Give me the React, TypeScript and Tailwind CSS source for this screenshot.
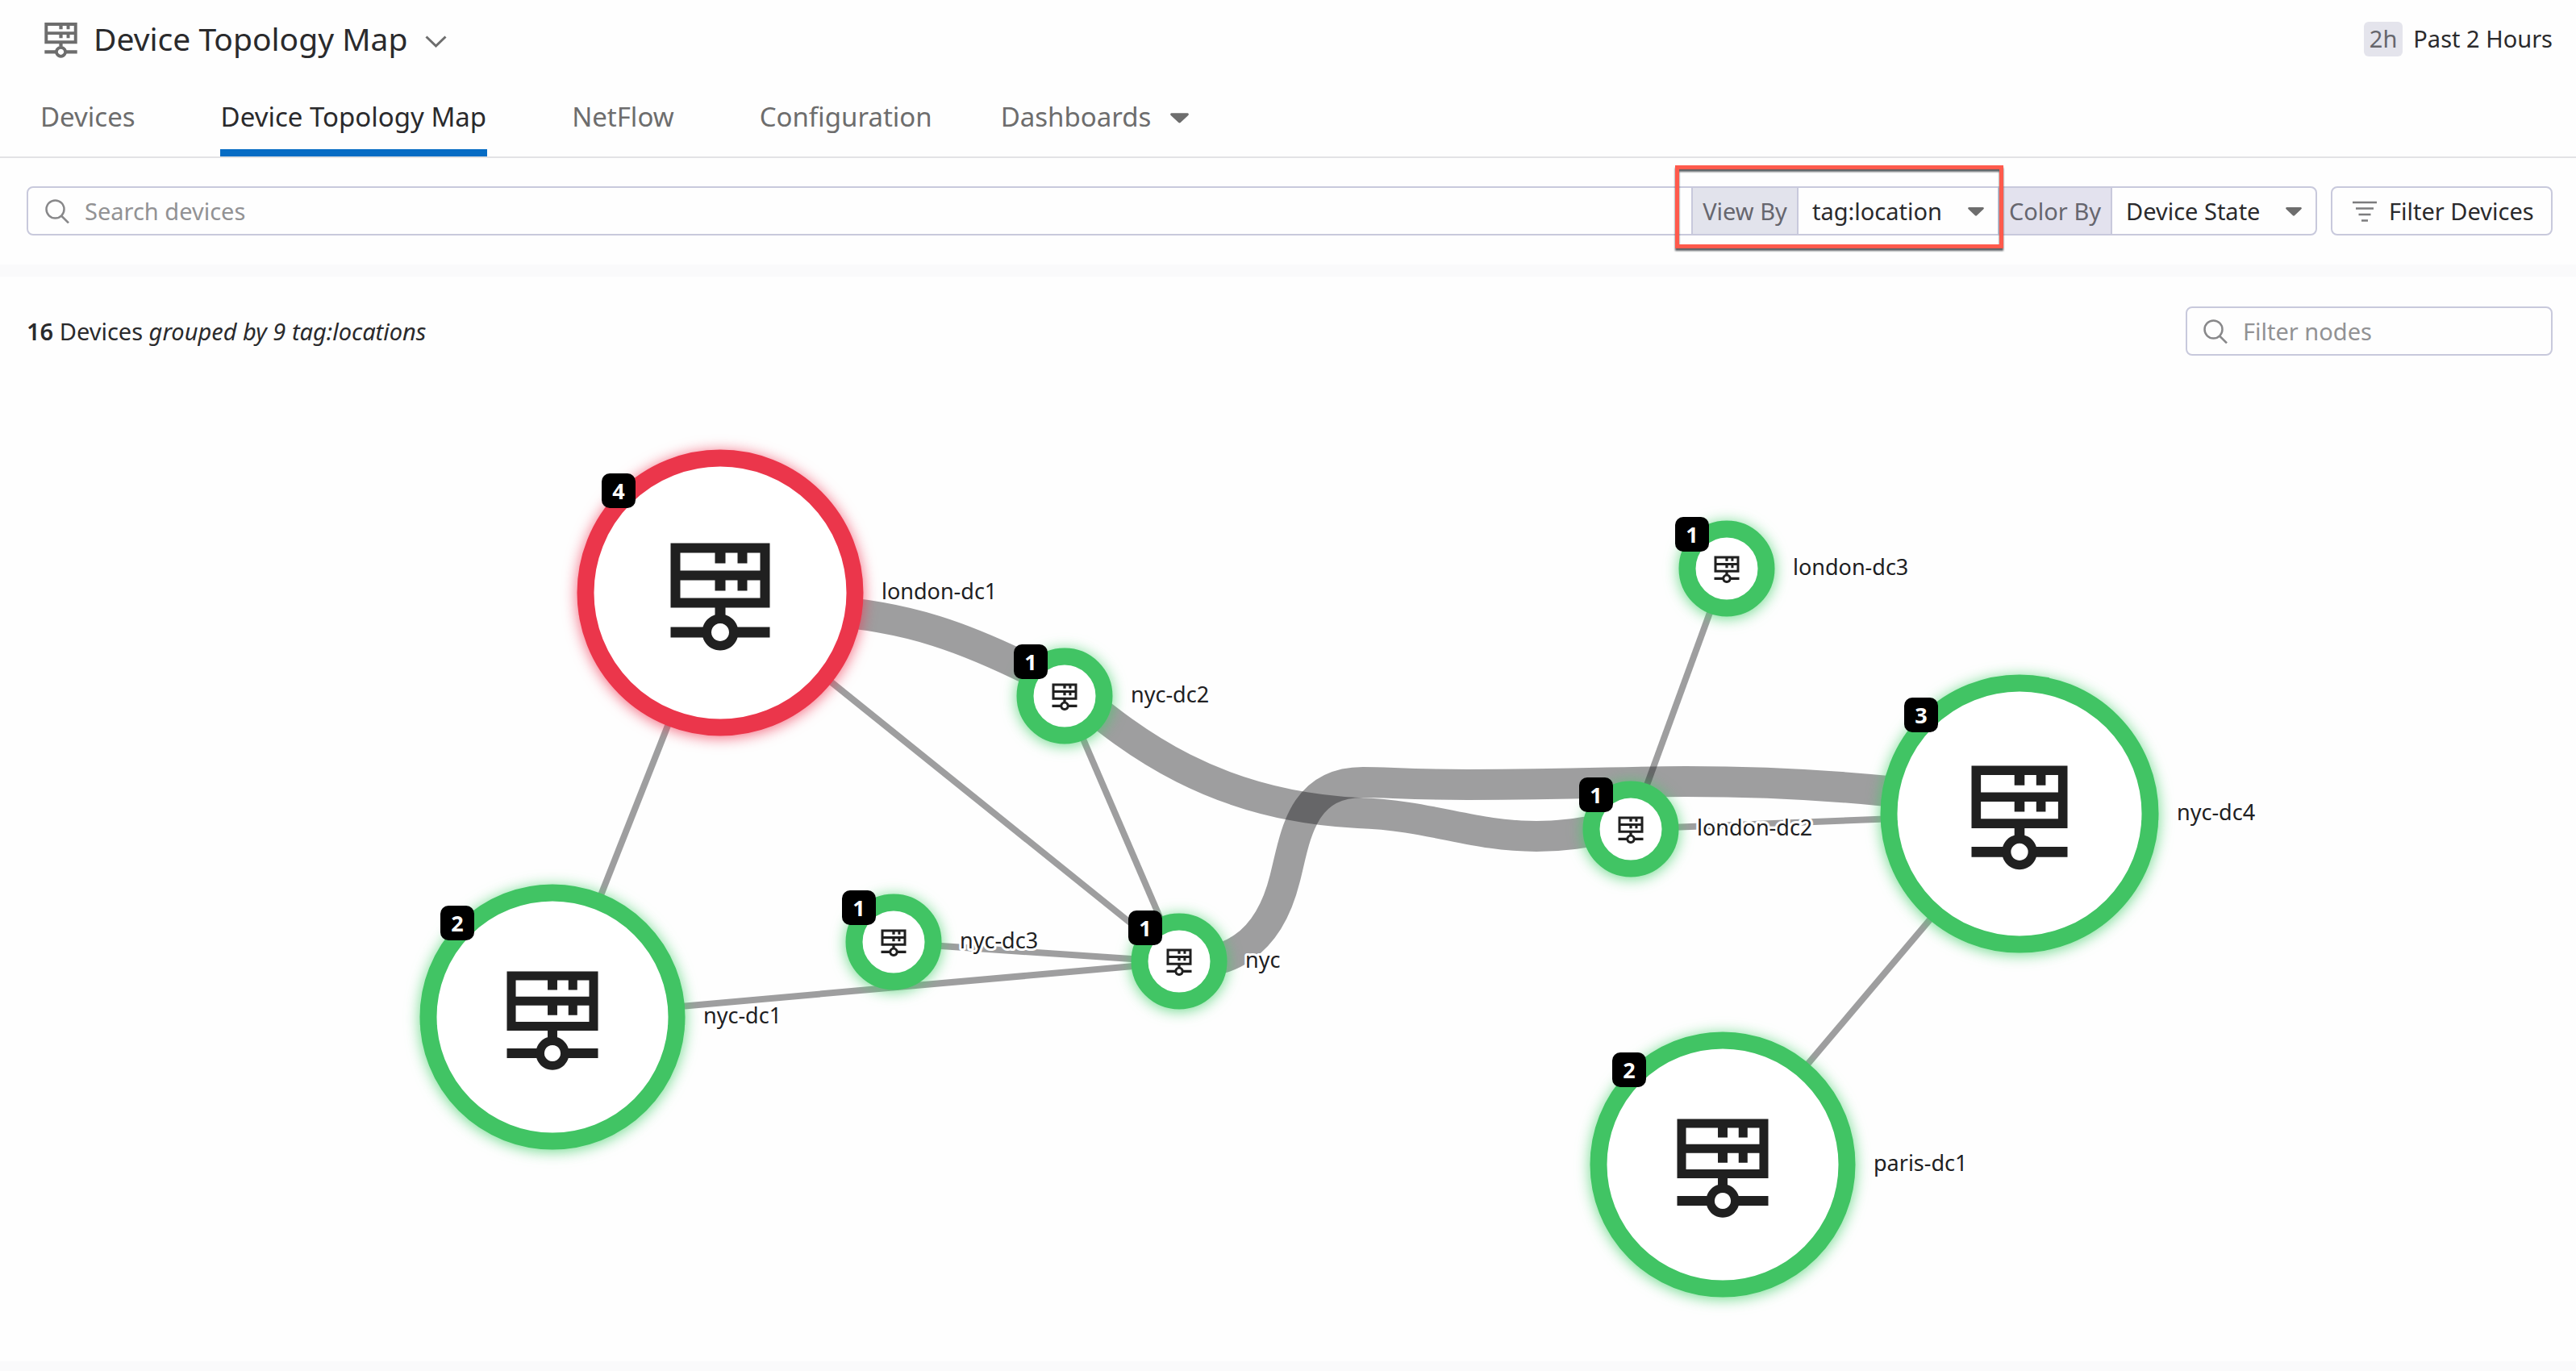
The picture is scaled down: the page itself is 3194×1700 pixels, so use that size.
import React from "react";

const RING_GREEN = "#41c464";
const RING_RED = "#eb364b";

type DeviceGroup = {
  name: string;
  count: number;
  x: number;
  y: number;
  radius: number;
  icon: number;
  badge: [number, number];
  alert?: boolean;
};

const groups: DeviceGroup[] = [
  { name: "nyc-dc1", count: 2, x: 685, y: 1261, radius: 165, icon: 113, badge: [567, 1145] },
  { name: "nyc-dc3", count: 1, x: 1108, y: 1168, radius: 60, icon: 31, badge: [1065, 1126] },
  { name: "nyc", count: 1, x: 1462, y: 1192, radius: 60, icon: 31, badge: [1420, 1151] },
  { name: "london-dc1", count: 4, x: 893, y: 735, radius: 178, icon: 123, badge: [767, 609], alert: true },
  { name: "nyc-dc2", count: 1, x: 1320, y: 863, radius: 60, icon: 31, badge: [1278, 821] },
  { name: "london-dc3", count: 1, x: 2141, y: 705, radius: 60, icon: 31, badge: [2098, 663] },
  { name: "london-dc2", count: 1, x: 2022, y: 1028, radius: 60, icon: 31, badge: [1979, 986] },
  { name: "nyc-dc4", count: 3, x: 2504, y: 1009, radius: 173, icon: 119, badge: [2382, 887] },
  { name: "paris-dc1", count: 2, x: 2136, y: 1444, radius: 165, icon: 113, badge: [2020, 1327] },
];

const thinLinks = [
  "M893 735L685 1262",
  "M893 735L1462 1193",
  "M1320 863L1462 1193",
  "M1108 1169L1462 1193",
  "M685 1262L1462 1193",
  "M2140 705L2022 1028",
  "M2022 1028L2504 1009",
  "M2504 1009L2136 1444",
];

const thickLinks = [
  "M1000 756C1120 761 1200 788 1330 858C1400 915 1500 999 1684 1008C1775 1011 1825 1037 1905 1037C1945 1037 1970 1031 2021 1022",
  "M1462 1193C1520 1198 1572 1174 1593 1090C1606 1040 1612 970 1690 970C1720 970 1750 973 1820 973C1960 973 2010 969 2090 969C2180 969 2270 974 2340 981L2400 988",
];

function DeviceShape() {
  return (
    <>
      <path
        fillRule="evenodd"
        d="M0 0H123V80H68V90H55V80H0ZM12 12V34H111V12H95V25H83V12H68V25H55V12ZM12 46V68H111V46H95V59H83V46H68V59H55V46Z"
      />
      <path d="M0 104H44V117H0ZM79 104H123V117H79Z" />
      <path
        fillRule="evenodd"
        d="M61.500 88a22.500 22.500 0 1 0 .01 0ZM61.500 99.500a11 11 0 1 1 -.01 0Z"
      />
    </>
  );
}

function SearchIcon({ className }: { className: string }) {
  return (
    <svg className={className} viewBox="0 0 30 30" fill="none" stroke="currentColor" strokeWidth="2.500" aria-hidden="true">
      <circle cx="12.500" cy="12.500" r="11" />
      <path d="M20 20.500L29 29.500" />
    </svg>
  );
}

function Caret({ className }: { className: string }) {
  return (
    <svg className={className} viewBox="0 0 24 13" fill="currentColor" aria-hidden="true">
      <path d="M1.500 0H22.500Q25 1 23 3L13.500 12Q12 13.500 10.500 12L1 3Q-1 1 1.500 0Z" />
    </svg>
  );
}

function Node({ group }: { group: DeviceGroup }) {
  const { x, y, radius, icon, badge } = group;
  const scale = icon / 123;
  return (
    <g>
      <circle
        cx={x}
        cy={y}
        r={radius - 11}
        fill="#fff"
        stroke={group.alert ? RING_RED : RING_GREEN}
        strokeWidth={21}
        className={
          group.alert
            ? "drop-shadow-[0_2px_9px_rgba(240,50,80,0.75)]"
            : "drop-shadow-[0_2px_9px_rgba(60,205,100,0.75)]"
        }
      />
      <g fill="#202020" transform={`translate(${x - 61.5 * scale} ${y - 61.5 * scale}) scale(${scale})`}>
        <DeviceShape />
      </g>
      <rect x={badge[0] - 21} y={badge[1] - 22} width={42} height={43} rx={10} />
      <text x={badge[0]} y={badge[1] + 10} textAnchor="middle" className="fill-white text-[27px] font-bold">
        {group.count}
      </text>
    </g>
  );
}

function TopologyGraph() {
  return (
    <svg className="block w-full" viewBox="0 449 3194 1239" role="img" aria-label="Topology of devices by location">
      <g fill="none" stroke="#1b1b1c" strokeOpacity={0.42}>
        {thinLinks.map((d) => (
          <path key={d} d={d} strokeWidth={8} />
        ))}
        {thickLinks.map((d) => (
          <path key={d} d={d} strokeWidth={38} />
        ))}
      </g>
      {groups.map((group) => (
        <Node key={group.name} group={group} />
      ))}
      {groups.map((group) => (
        <text
          key={group.name}
          x={group.x + group.radius + 22}
          y={group.y + 8}
          stroke="#fff"
          strokeWidth={6}
          strokeLinejoin="round"
          paintOrder="stroke"
          className="fill-[#202022] text-[27px]"
        >
          {group.name}
        </text>
      ))}
    </svg>
  );
}

const tabClass = "flex h-full items-center border-b-[9px] border-transparent px-px pt-[8px] text-[#6d6d6d]";

export default function App() {
  return (
    <div className="min-h-screen bg-[#fafafb] font-['Noto_Sans',sans-serif] text-[29px] leading-[40px] text-[#2a2a2c]">
      <header className="border-b-2 border-[#e3e3e5] bg-[#fefefe]">
        <div className="flex h-24 items-center justify-between pl-[55px] pr-[29px]">
          <div className="flex items-center">
            <svg className="mt-1 h-[44px] w-[41px] text-[#6d6d6d]" viewBox="0 0 123 134" fill="currentColor" aria-hidden="true">
              <DeviceShape />
            </svg>
            <h1 className="ml-[20px] text-[39px] leading-[56px]">Device Topology Map</h1>
            <button type="button" aria-label="Switch page" className="ml-[22px] mt-[6px] text-[#6d6d6d]">
              <svg className="block h-[15px] w-[27px]" viewBox="0 0 27 15" fill="none" stroke="currentColor" strokeWidth="3" aria-hidden="true">
                <path d="M1.500 1.500L13.500 13L25.500 1.500" />
              </svg>
            </button>
          </div>
          <button type="button" className="flex items-center gap-[13px]">
            <span className="flex h-[43px] items-center rounded-[6px] bg-[#e4e4ec] px-[7px] text-[#66666c]">2h</span>
            <span>Past 2 Hours</span>
          </button>
        </div>
        <nav className="flex h-[98px] items-stretch gap-[104px] pl-[49px] text-[33px] leading-[44px]">
          <a href="#devices" className={tabClass}>Devices</a>
          <a
            href="#map"
            aria-current="page"
            className="flex h-full items-center border-b-[9px] border-[#066cc4] px-px pt-[8px]"
          >
            Device Topology Map
          </a>
          <a href="#netflow" className={tabClass}>NetFlow</a>
          <a href="#configuration" className={tabClass}>Configuration</a>
          <button type="button" className="-ml-5 flex h-full items-center gap-[24px] pb-px text-[#6d6d6d]">
            Dashboards
            <Caret className="mt-[4px] h-[13px] w-[23px]" />
          </button>
        </nav>
      </header>

      <div className="flex gap-[17px] bg-[#fefefe] pb-[36px] pl-[33px] pr-[29px] pt-[35px]">
        <div className="flex h-[61px] min-w-0 flex-1 rounded-[8px] border-2 border-[#c8c9dc]">
          <label className="flex min-w-0 flex-1 items-center pl-[21px]">
            <SearchIcon className="h-[30px] w-[30px] shrink-0 text-[#88888a]" />
            <input
              type="search"
              aria-label="Search devices"
              placeholder="Search devices"
              className="ml-[19px] min-w-0 flex-1 bg-transparent outline-none placeholder:text-[#929294]"
            />
          </label>
          <div className="relative flex">
            <label htmlFor="view-by" className="flex w-[133px] items-center justify-center border-x-2 border-[#c8c9dc] bg-[#e2e3ec] text-[#66666e]">
              View By
            </label>
            <div className="relative flex w-[247px]">
              <select id="view-by" className="w-full appearance-none bg-transparent pl-[17px] outline-none">
                <option>tag:location</option>
              </select>
              <Caret className="pointer-events-none absolute right-[17px] top-[24px] h-[11px] w-[20px] text-[#6d6d6d]" />
            </div>
            <div className="pointer-events-none absolute -bottom-[18px] -left-[20px] -right-[7px] -top-[28px] z-10 border-[5px] border-[#ff5a4c] drop-shadow-[0_3px_1px_rgba(50,55,60,0.8)]" />
          </div>
          <label htmlFor="color-by" className="flex w-[142px] items-center justify-center border-x-2 border-[#c8c9dc] bg-[#e3e2ee] text-[#66666e]">
            Color By
          </label>
          <div className="relative flex w-[252px]">
            <select id="color-by" className="w-full appearance-none bg-transparent pl-[17px] outline-none">
              <option>Device State</option>
            </select>
            <Caret className="pointer-events-none absolute right-[17px] top-[24px] h-[11px] w-[20px] text-[#6d6d6d]" />
          </div>
        </div>
        <button type="button" className="flex w-[275px] items-center whitespace-nowrap rounded-[8px] border-2 border-[#c8c9dc] pl-[25px]">
          <svg className="mr-[15px] h-[26px] w-[30px] text-[#7c7c7e]" viewBox="0 0 30 26" stroke="currentColor" strokeWidth="2.500" aria-hidden="true">
            <path d="M0 2H30M4 9.500H26M7.500 17H22.500M11 24.500H19" />
          </svg>
          Filter Devices
        </button>
      </div>

      <main className="mt-[15px] bg-[#fefefe]">
        <div className="flex items-center justify-between pb-[8px] pl-[33px] pr-[29px] pt-[37px]">
          <p>
            <strong className="font-semibold">16</strong> Devices <em>grouped by 9 tag:locations</em>
          </p>
          <label className="flex h-[61px] w-[455px] items-center rounded-[8px] border-2 border-[#c8c9dc] pl-[20px]">
            <SearchIcon className="h-[30px] w-[30px] shrink-0 text-[#88888a]" />
            <input
              type="search"
              aria-label="Filter nodes"
              placeholder="Filter nodes"
              className="ml-[19px] min-w-0 flex-1 bg-transparent outline-none placeholder:text-[#929294]"
            />
          </label>
        </div>
        <TopologyGraph />
      </main>
    </div>
  );
}
